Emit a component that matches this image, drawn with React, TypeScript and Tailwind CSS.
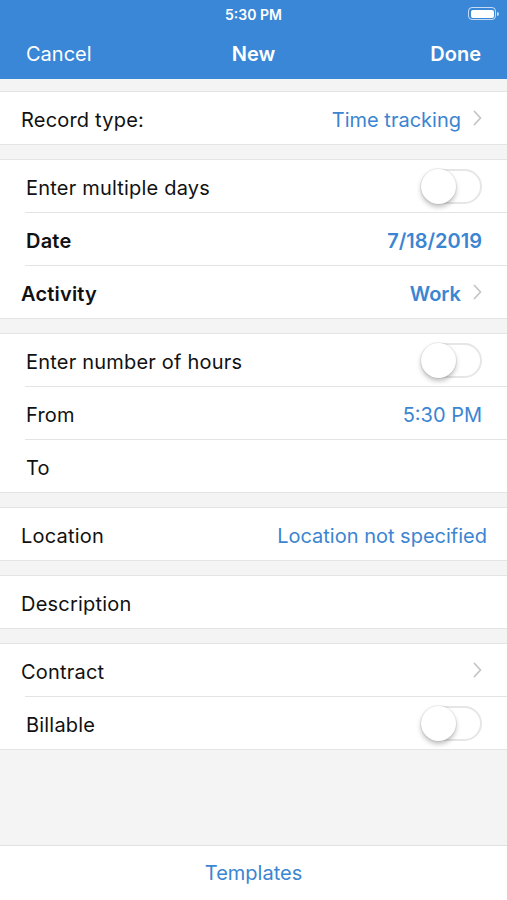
const font = { fontFamily: 'Inter, "Liberation Sans", Arial, sans-serif' };

function Chevron() {
  return (
    <svg width="9" height="16" viewBox="0 0 9 16" className="ml-3 shrink-0">
      <path d="M1.5 1.5 L7.5 8 L1.5 14.5" fill="none" stroke="#c5c5c8" strokeWidth="1.8" strokeLinecap="round" strokeLinejoin="round" />
    </svg>
  );
}

function Toggle() {
  return (
    <div className="relative h-[35px] w-[61px] shrink-0 rounded-full border-2 border-[#e6e6e6] bg-white">
      <div className="absolute -left-[2px] -top-[2px] h-[35px] w-[35px] rounded-full bg-white shadow-[0_3px_5px_rgba(0,0,0,0.25),0_0_0_1px_rgba(0,0,0,0.06)]" />
    </div>
  );
}

type RowProps = {
  label: string;
  inset?: boolean;
  bold?: boolean;
  value?: string;
  valueBold?: boolean;
  chevron?: boolean;
  toggle?: boolean;
  last?: boolean;
  wide?: boolean;
};

function Row({ label, inset, bold, value, valueBold, chevron, toggle, last, wide }: RowProps) {
  return (
    <div className={`ml-[25px] ${last ? "" : "border-b border-[#e4e4e4]"}`}>
      <div
        className={`flex h-[52px] items-center ${wide ? "pr-[20px]" : "pr-[25px]"} ${inset ? "-ml-[25px] pl-[26px]" : "-ml-[25px] pl-[21px]"}`}
      >
        <span className={`flex-1 pt-[4px] text-[20px] tracking-[0.2px] text-[#111] ${bold ? "font-semibold" : ""}`}>{label}</span>
        {value && (
          <span className={`pt-[4px] text-[20px] text-[#3b85d2] ${valueBold ? "font-semibold" : ""}`}>{value}</span>
        )}
        {chevron && <Chevron />}
        {toggle && <Toggle />}
      </div>
    </div>
  );
}

function Group({ children }: { children: React.ReactNode }) {
  return <div className="border-y border-[#e4e4e4] bg-white">{children}</div>;
}

export default function App() {
  return (
    <div style={font} className="flex h-[900px] w-[507px] flex-col overflow-hidden bg-[#f4f4f4]">
      {/* header */}
      <div className="bg-[#3a87d7] text-white">
        <div className="relative flex h-[28px] items-center justify-center">
          <span className="text-[14px] font-semibold">5:30 PM</span>
          <div className="absolute right-[8px] top-[7px] flex items-center">
            <div className="h-[13px] w-[28px] rounded-[4px] border border-white/70 p-[1.5px]">
              <div className="h-full w-full rounded-[2px] bg-white" />
            </div>
            <div className="ml-[1px] h-[4px] w-[2px] rounded-r-sm bg-white/70" />
          </div>
        </div>
        <div className="grid h-[51px] grid-cols-3 items-center px-[26px] text-[20px]">
          <span>Cancel</span>
          <span className="text-center font-semibold">New</span>
          <span className="text-right font-semibold">Done</span>
        </div>
      </div>

      <div className="flex flex-1 flex-col gap-[14px] pt-[12px]">
        <Group>
          <Row label="Record type:" value="Time tracking" chevron last />
        </Group>
        <Group>
          <Row label="Enter multiple days" inset toggle />
          <Row label="Date" inset bold value="7/18/2019" valueBold />
          <Row label="Activity" bold value="Work" valueBold chevron last />
        </Group>
        <Group>
          <Row label="Enter number of hours" inset toggle />
          <Row label="From" inset value="5:30 PM" />
          <Row label="To" inset last />
        </Group>
        <Group>
          <Row label="Location" value="Location not specified" wide last />
        </Group>
        <Group>
          <Row label="Description" last />
        </Group>
        <Group>
          <Row label="Contract" chevron />
          <Row label="Billable" inset toggle last />
        </Group>
      </div>

      <div className="flex h-[55px] items-center justify-center border-t border-[#e0e0e0] bg-white">
        <span className="text-[20px] text-[#3b85d2]">Templates</span>
      </div>
    </div>
  );
}
